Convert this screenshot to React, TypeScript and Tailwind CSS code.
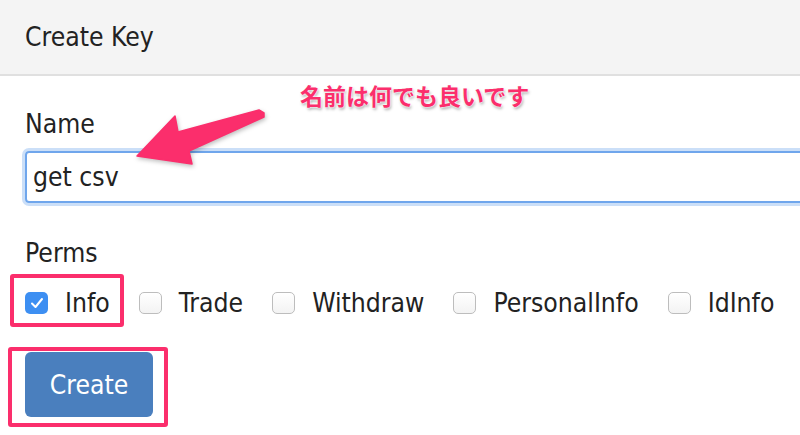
import React from 'react';

const perms = [
    { label: 'Info', checked: true },
    { label: 'Trade', checked: false },
    { label: 'Withdraw', checked: false },
    { label: 'PersonalInfo', checked: false },
    { label: 'IdInfo', checked: false },
];

function Checkbox({ checked }: { checked: boolean }) {
    if (checked) {
        return (
            <span className="w-[23px] h-[22px] rounded-[5px] bg-[#3d8ff2] flex items-center justify-center shrink-0">
                <svg width="14" height="12" viewBox="0 0 14 12" fill="none">
                    <path d="M2 6.5 L5.5 10 L12 2" stroke="#fff" strokeWidth="2" strokeLinecap="round" strokeLinejoin="round" />
                </svg>
            </span>
        );
    }
    return (
        <span className="w-[23px] h-[22px] rounded-[5px] border border-[#bdbdbd] bg-gradient-to-b from-white to-[#f3f3f3] shrink-0" />
    );
}

export default function App() {
    return (
        <div className="relative w-[800px] h-[435px] overflow-hidden bg-white text-[#222] font-['DejaVu_Sans_Condensed','DejaVu_Sans',sans-serif] text-[26.3px] leading-[32px]">
            {/* Header */}
            <div className="h-[76px] bg-[#f4f4f4] border-b-2 border-[#e0e0e0] px-[25px] flex items-center">
                Create Key
            </div>

            {/* Form */}
            <div className="pl-[25px]">
                <div className="mt-[32px]">Name</div>
                <div className="mt-[11px] w-[820px] h-[52px] rounded-[4px] border-2 border-[#6fa6ec] shadow-[0_0_0_3px_rgba(140,185,240,0.45)] flex items-center px-[6px]">
                    get csv
                </div>

                <div className="mt-[34px]">Perms</div>
                <div className="mt-[18px] flex items-center">
                    {perms.map((p) => (
                        <div key={p.label} className="flex items-center mr-[29px]">
                            <Checkbox checked={p.checked} />
                            <span className="ml-[17px]">{p.label}</span>
                        </div>
                    ))}
                </div>

                <button className="mt-[33px] w-[128px] h-[65px] rounded-[6px] bg-[#4a7fbe] text-white flex items-center justify-center">
                    Create
                </button>
            </div>

            {/* Annotations */}
            <div className="absolute left-[10px] top-[274px] w-[114px] h-[53px] border-4 border-[#fb2e6c] rounded-[3px]" />
            <div className="absolute left-[8px] top-[347px] w-[160px] h-[80px] border-4 border-[#fb2e6c] rounded-[3px]" />

            <div className="absolute left-[300px] top-[84px] font-['Noto_Sans_CJK_JP',sans-serif] font-bold text-[23px] leading-[23px] text-[#fb2e6c] [text-shadow:0_0_2px_#fff,0_0_2px_#fff,1px_2px_3px_rgba(0,0,0,0.35)]">
                名前は何でも良いです
            </div>

            <svg className="absolute left-0 top-0" width="800" height="435" viewBox="0 0 800 435">
                <polygon
                    points="137,156 175,116 178,132 259,110 264,113 264,117 189,151 192,164"
                    fill="#fb2e6c"
                    stroke="#fb2e6c"
                    strokeWidth="1.5"
                    strokeLinejoin="round"
                    style={{ filter: 'drop-shadow(1px 2px 2px rgba(0,0,0,0.25))' }}
                />
            </svg>
        </div>
    );
}
